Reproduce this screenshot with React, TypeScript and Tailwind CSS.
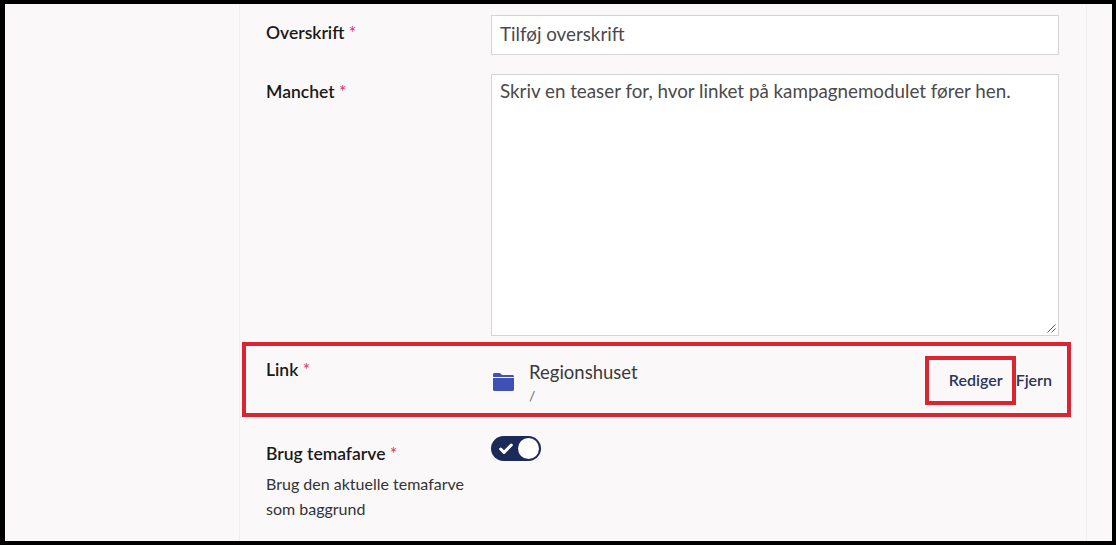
import { Check } from "lucide-react";

function Label({ text }: { text: string }) {
  return (
    <p className="text-[17.5px] leading-[22px] font-semibold text-[#1a1a1a]">
      {text} <span className="font-normal text-[#d5336b]">*</span>
    </p>
  );
}

export default function App() {
  return (
    <div className="h-[545px] w-[1116px] overflow-hidden border-[4px] border-l-[5px] border-black bg-[#faf8f9] font-['Lato',sans-serif]">
      <div className="ml-[234px] h-full w-[848px] border-x border-[#f0eef0] pl-[26px]">
        <div className="grid grid-cols-[225px_568px] pt-[11px]">
          <div className="pt-[7px]">
            <Label text="Overskrift" />
          </div>
          <div className="flex h-10 items-center border border-[#d4d4d4] bg-white px-2 pb-[2px] text-[18.8px] text-[#4a4a4a]">
            Tilføj overskrift
          </div>

          <div className="pt-[26px]">
            <Label text="Manchet" />
          </div>
          <div className="relative mt-[19px] h-[262px] border border-[#d4d4d4] bg-white pl-2 pr-2 pt-[3px] text-[18.8px] leading-[26px] text-[#4a4a4a]">
            Skriv en teaser for, hvor linket på kampagnemodulet fører hen.
            <svg className="absolute bottom-[2px] right-[2px]" width="9" height="9" viewBox="0 0 9 9" fill="none" stroke="#555" strokeWidth="1">
              <path d="M0.5 8.5L8.5 0.5M4.5 8.5L8.5 4.5" />
            </svg>
          </div>

          <div className="pt-[23px]">
            <Label text="Link" />
          </div>
          <div className="flex h-[100px] items-start pt-[24px]">
            <svg className="ml-[2px] mt-[12px] w-[21px] shrink-0" height="19" viewBox="0 0 21 19" fill="#3f51b5">
              <path d="M0 5V2.500C0 1.600 .7 1 1.500 1H7L9 3H19.500C20.300 3 21 3.600 21 4.500V5Z" />
              <path d="M0 6H21V17.500C21 18.300 20.300 19 19.500 19H1.500C.7 19 0 18.300 0 17.500Z" />
            </svg>
            <div className="ml-[15px] flex-1">
              <p className="text-[18.5px] leading-[24px] text-[#3a3a3a]">Regionshuset</p>
              <p className="mt-[2px] text-[14px] leading-[20px] text-[#666]">/</p>
            </div>
            <div className="mr-[7px] mt-[8px] flex gap-[13px] text-[16px] font-semibold leading-[24px] text-[#2b3558]">
              <span>Rediger</span>
              <span>Fjern</span>
            </div>
          </div>

          <div className="pt-[7px]">
            <Label text="Brug temafarve" />
            <p className="mt-[6px] w-[210px] text-[16px] leading-[25px] text-[#333]">
              Brug den aktuelle temafarve som baggrund
            </p>
          </div>
          <div>
            <div className="flex h-[25px] w-[50px] items-center justify-between rounded-full bg-[#1b2a58] pl-[7px] pr-[2px]">
              <Check size={16} strokeWidth={4.5} className="text-white" />
              <span className="h-[21px] w-[21px] rounded-full bg-white" />
            </div>
          </div>
        </div>
      </div>

      <div className="pointer-events-none absolute left-[242px] top-[342px] h-[75px] w-[829px] border-[4px] border-[#dc2430]" />
      <div className="pointer-events-none absolute left-[925px] top-[356px] h-[49px] w-[91px] border-[4px] border-[#dc2430]" />
    </div>
  );
}
